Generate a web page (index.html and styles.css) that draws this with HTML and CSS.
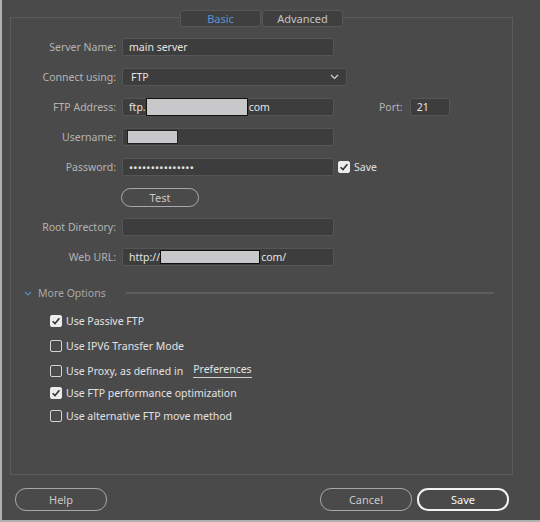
FILE: index.html
```html
<!DOCTYPE html>
<html>
<head>
<meta charset="utf-8">
<link rel="stylesheet" href="styles.css">
</head>
<body>
<div class="dialog">
  <div class="panel">
    <div class="tabs">
      <div class="tab active">Basic</div>
      <div class="tab">Advanced</div>
    </div>
    <div class="form">
      <div class="row">
        <label class="lbl">Server Name:</label>
        <div class="field w211">main server</div>
      </div>
      <div class="row">
        <label class="lbl">Connect using:</label>
        <div class="field select w224"><span class="sel">FTP</span>
          <svg class="chev" width="9" height="6" viewBox="0 0 9 6"><path d="M1 1 L4.5 4.5 L8 1" fill="none" stroke="#d8d8d8" stroke-width="1.2"/></svg>
        </div>
      </div>
      <div class="row">
        <label class="lbl">FTP Address:</label>
        <div class="field w211">ftp.<span class="redact r1"></span>com</div>
        <label class="lbl port">Port:</label>
        <div class="field w40">21</div>
      </div>
      <div class="row">
        <label class="lbl">Username:</label>
        <div class="field w211"><span class="redact r2"></span></div>
      </div>
      <div class="row">
        <label class="lbl">Password:</label>
        <div class="field w211 dots">•••••••••••••••</div>
        <span class="cb checked save-cb"><svg width="12" height="12" viewBox="0 0 12 12"><path d="M2.6 6.2 L5 8.6 L9.4 3.2" fill="none" stroke="#333" stroke-width="1.6"/></svg></span>
        <span class="save-lbl">Save</span>
      </div>
      <div class="row">
        <span class="lbl"></span>
        <button class="pill test">Test</button>
      </div>
      <div class="row">
        <label class="lbl">Root Directory:</label>
        <div class="field w211"></div>
      </div>
      <div class="row">
        <label class="lbl">Web URL:</label>
        <div class="field w211">http://<span class="redact r3"></span>com/</div>
      </div>
    </div>
    <div class="more">
      <svg class="mchev" width="8" height="5" viewBox="0 0 8 5"><path d="M1 1 L4 4 L7 1" fill="none" stroke="#5b8fc6" stroke-width="1.1"/></svg>
      <span class="more-txt">More Options</span>
      <span class="more-line"></span>
    </div>
    <div class="opts">
      <div class="opt o1"><span class="cb checked"><svg width="12" height="12" viewBox="0 0 12 12"><path d="M2.6 6.2 L5 8.6 L9.4 3.2" fill="none" stroke="#333" stroke-width="1.6"/></svg></span>Use Passive FTP</div>
      <div class="opt o2"><span class="cb"></span>Use IPV6 Transfer Mode</div>
      <div class="opt o3"><span class="cb"></span>Use Proxy, as defined in <span class="link">Preferences</span></div>
      <div class="opt o4"><span class="cb checked"><svg width="12" height="12" viewBox="0 0 12 12"><path d="M2.6 6.2 L5 8.6 L9.4 3.2" fill="none" stroke="#333" stroke-width="1.6"/></svg></span>Use FTP performance optimization</div>
      <div class="opt"><span class="cb"></span>Use alternative FTP move method</div>
    </div>
  </div>
  <div class="footer">
    <button class="pill big">Help</button>
    <span class="spacer"></span>
    <button class="pill big">Cancel</button>
    <button class="pill big primary">Save</button>
  </div>
</div>
</body>
</html>
```

FILE: styles.css
```css
html, body {
  margin: 0;
  padding: 0;
}
body {
  width: 540px;
  height: 522px;
  background: #4a4a4a;
  font-family: "Noto Sans", "Open Sans", sans-serif;
  font-size: 10.5px;
  color: #d8d8d8;
  overflow: hidden;
}
.dialog {
  width: 538px;
  height: 520px;
  border-left: 2px solid #b0b0b0;
  border-bottom: 2px solid #b0b0b0;
  display: flex;
  flex-direction: column;
}
.panel {
  margin: 17px 0 0 8px;
  width: 503px;
  height: 458px;
  box-sizing: border-box;
  border: 1px solid #5c5c5c;
  display: flex;
  flex-direction: column;
}
.tabs {
  display: flex;
  justify-content: center;
  gap: 1px;
  margin-top: -8px;
}
.tab {
  width: 81px;
  height: 17px;
  box-sizing: border-box;
  background: #3f3f3f;
  border: 1px solid #575757;
  border-radius: 3px;
  text-align: center;
  line-height: 15px;
  color: #c4c4c4;
  font-size: 11px;
}
.tab.active {
  color: #5a93cf;
}
.form {
  display: flex;
  flex-direction: column;
  gap: 12px;
  margin-top: 11px;
}
.row {
  display: flex;
  align-items: center;
  height: 18px;
}
.lbl {
  width: 105px;
  text-align: right;
  color: #b4b4b4;
  margin-right: 6px;
  flex: none;
}
.field {
  height: 18px;
  box-sizing: border-box;
  background: #3d3d3d;
  border: 1px solid #555;
  border-radius: 2px;
  color: #e4e4e4;
  padding: 0 0 0 6px;
  display: flex;
  align-items: center;
  white-space: nowrap;
}
.w211 { width: 212px; }
.w224 { width: 225px; }
.w40 { width: 40px; }
.select {
  justify-content: space-between;
  padding-left: 8px;
  padding-right: 7px;
}
.port {
  width: auto;
  margin-left: 45px;
  margin-right: 7px;
}
.redact {
  display: inline-block;
  background: #c8c8cb;
  border: 1px solid #111;
  height: 18px;
  box-sizing: border-box;
}
.r1 { width: 102px; margin-left: 0; margin-right: 1px; }
.r2 { width: 51px; height: 14px; border: 1px solid #222; margin-left: -2px; }
.r3 { width: 100px; height: 14px; border: 1px solid #111; margin-right: 1px; }
.dots {
  letter-spacing: 0.2px;
  font-size: 11px;
}
.cb {
  width: 12px;
  height: 12px;
  box-sizing: border-box;
  border: 1px solid #d4d4d4;
  border-radius: 2px;
  flex: none;
  display: inline-flex;
}
.cb.checked {
  background: #ececec;
  border-color: #ececec;
}
.cb svg { margin: -1px; }
.save-cb {
  margin-left: 4px;
}
.save-lbl {
  margin-left: 4px;
  color: #e0e0e0;
}
.pill {
  font-family: inherit;
  font-size: 11px;
  background: transparent;
  border: 1px solid #a8a8a8;
  border-radius: 11px;
  color: #c8c8c8;
  padding: 0;
  box-sizing: border-box;
}
.test {
  width: 78px;
  height: 19px;
  margin-left: -1px;
}
.more {
  display: flex;
  align-items: center;
  margin-top: 20px;
  height: 14px;
}
.mchev {
  margin-left: 13px;
}
.more-txt {
  margin-left: 6px;
  color: #a8a8a8;
}
.more-line {
  margin-left: 20px;
  width: 368px;
  height: 2px;
  background: #5e5e5e;
}
.opts {
  display: flex;
  flex-direction: column;
  margin-top: 13px;
  padding-left: 39px;
}
.opt {
  display: flex;
  align-items: center;
  height: 15px;
  gap: 4px;
  color: #e2e2e2;
}
.o1, .o2 { margin-bottom: 10px; }
.o3 { margin-bottom: 7px; }
.o4 { margin-bottom: 8px; }
.link {
  margin-left: 6px;
  border-bottom: 1px solid #d0d0d0;
  line-height: 13px;
  padding-bottom: 1px;
}
.footer {
  display: flex;
  align-items: center;
  margin-top: 13px;
  padding: 0 31px 0 13px;
  gap: 5px;
}
.spacer { flex: 1; }
.big {
  width: 92px;
  height: 23px;
}
.primary {
  border: 2px solid #f2f2f2;
  color: #f4f4f4;
}
```
